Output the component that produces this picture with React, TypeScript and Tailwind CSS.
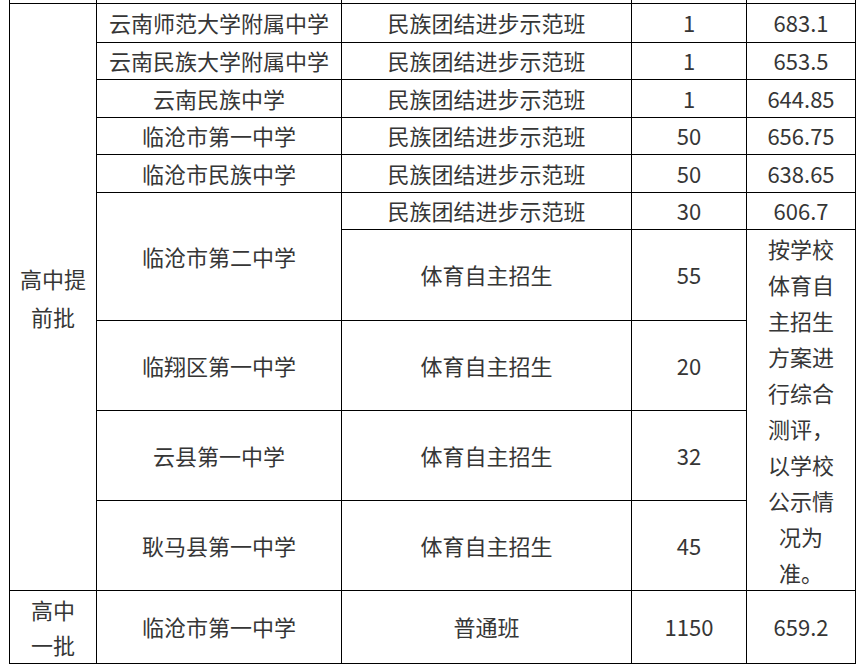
const td = "border border-black text-center align-middle p-0";

const tiny: [string, string, string, string][] = [
  ["云南师范大学附属中学", "民族团结进步示范班", "1", "683.1"],
  ["云南民族大学附属中学", "民族团结进步示范班", "1", "653.5"],
  ["云南民族中学", "民族团结进步示范班", "1", "644.85"],
  ["临沧市第一中学", "民族团结进步示范班", "50", "656.75"],
  ["临沧市民族中学", "民族团结进步示范班", "50", "638.65"],
];

const heights = ["h-[39px]", "h-[37px]", "h-[38px]", "h-[37px]", "h-[38px]"];

export default function App() {
  return (
    <div
      className="min-h-screen bg-white pl-[9px] text-[22px] text-[#363636]"
      style={{ fontFamily: '"Noto Sans CJK SC", "Noto Sans", sans-serif' }}
    >
      <table className="w-[846px] table-fixed border-collapse">
        <colgroup>
          <col className="w-[87px]" />
          <col className="w-[245px]" />
          <col className="w-[290px]" />
          <col className="w-[115px]" />
          <col className="w-[109px]" />
        </colgroup>
        <tbody>
          {/* tail of the row above, cut off by the screenshot */}
          <tr className="h-[3px]">
            <td className="border-x border-b border-black p-0" />
            <td className="border-x border-b border-black p-0" />
            <td className="border-x border-b border-black p-0" />
            <td className="border-x border-b border-black p-0" />
            <td className="border-x border-b border-black p-0" />
          </tr>
          {tiny.map(([school, cls, n, score], i) => (
            <tr key={school} className={heights[i]}>
              {i === 0 && (
                <td rowSpan={10} className={`${td} px-[8px] leading-[38px]`}>
                  高中提前批
                </td>
              )}
              <td className={`${td} whitespace-nowrap`}>{school}</td>
              <td className={td}>{cls}</td>
              <td className={td}>{n}</td>
              <td className={td}>{score}</td>
            </tr>
          ))}
          <tr className="h-[37px]">
            <td rowSpan={2} className={td}>临沧市第二中学</td>
            <td className={td}>民族团结进步示范班</td>
            <td className={td}>30</td>
            <td className={td}>606.7</td>
          </tr>
          <tr className="h-[91px]">
            <td className={td}>体育自主招生</td>
            <td className={td}>55</td>
            <td rowSpan={4} className={`${td} px-[12px] leading-[36px]`}>
              按学校体育自主招生方案进行综合测评，以学校公示情况为准。
            </td>
          </tr>
          <tr className="h-[90px]">
            <td className={td}>临翔区第一中学</td>
            <td className={td}>体育自主招生</td>
            <td className={td}>20</td>
          </tr>
          <tr className="h-[90px]">
            <td className={td}>云县第一中学</td>
            <td className={td}>体育自主招生</td>
            <td className={td}>32</td>
          </tr>
          <tr className="h-[90px]">
            <td className={td}>耿马县第一中学</td>
            <td className={td}>体育自主招生</td>
            <td className={td}>45</td>
          </tr>
          <tr className="h-[73px]">
            <td className={`${td} px-[14px] leading-[35px]`}>高中一批</td>
            <td className={td}>临沧市第一中学</td>
            <td className={td}>普通班</td>
            <td className={td}>1150</td>
            <td className={td}>659.2</td>
          </tr>
        </tbody>
      </table>
    </div>
  );
}
